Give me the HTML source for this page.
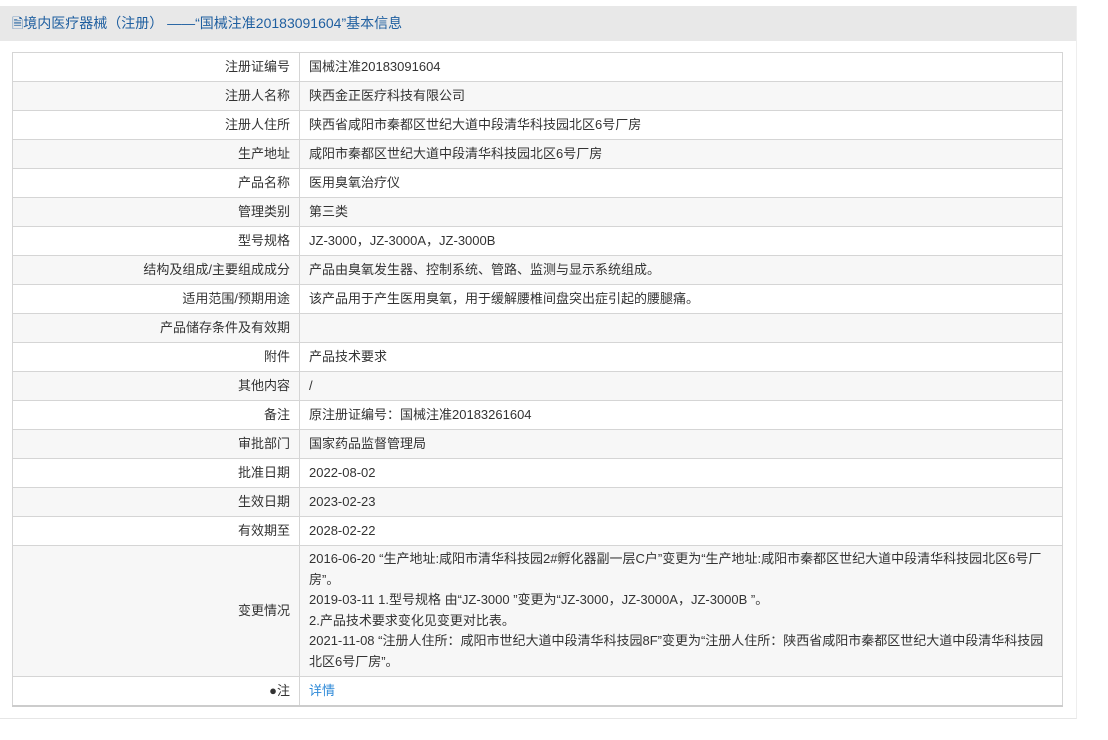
<!DOCTYPE html>
<html><head><meta charset="utf-8"><style>
body{margin:0;background:#fff;font-family:"Liberation Sans","Noto Sans CJK SC",sans-serif;font-size:13px;color:#333;}
.wrap{position:absolute;left:0;top:6px;width:1076px;height:712px;border-right:1px solid #eee;border-bottom:1px solid #e6e6e6;}
.hd{height:35px;background:#e8e8e8;color:#1f5fa0;font-size:14px;line-height:35px;padding-left:12px;}
table{position:absolute;left:12px;top:46px;width:1051px;border-collapse:collapse;border:1px solid #ccc;border-bottom:2px solid #ccc;}
td{border:1px solid #d5d5d5;height:28px;padding:0 9px;line-height:20px;}
td.l{width:268px;text-align:right;}
tr:nth-child(even){background:#f7f7f7;}
a{color:#2f8ad8;text-decoration:none;}
</style></head><body>
<div class="wrap"><div class="hd">🗎境内医疗器械（注册） ——“国械注准20183091604”基本信息</div>
<table>
<tr><td class="l">注册证编号</td><td>国械注准20183091604</td></tr>
<tr><td class="l">注册人名称</td><td>陕西金正医疗科技有限公司</td></tr>
<tr><td class="l">注册人住所</td><td>陕西省咸阳市秦都区世纪大道中段清华科技园北区6号厂房</td></tr>
<tr><td class="l">生产地址</td><td>咸阳市秦都区世纪大道中段清华科技园北区6号厂房</td></tr>
<tr><td class="l">产品名称</td><td>医用臭氧治疗仪</td></tr>
<tr><td class="l">管理类别</td><td>第三类</td></tr>
<tr><td class="l">型号规格</td><td>JZ-3000，JZ-3000A，JZ-3000B</td></tr>
<tr><td class="l">结构及组成/主要组成成分</td><td>产品由臭氧发生器、控制系统、管路、监测与显示系统组成。</td></tr>
<tr><td class="l">适用范围/预期用途</td><td>该产品用于产生医用臭氧，用于缓解腰椎间盘突出症引起的腰腿痛。</td></tr>
<tr><td class="l">产品储存条件及有效期</td><td></td></tr>
<tr><td class="l">附件</td><td>产品技术要求</td></tr>
<tr><td class="l">其他内容</td><td>/</td></tr>
<tr><td class="l">备注</td><td>原注册证编号：国械注准20183261604</td></tr>
<tr><td class="l">审批部门</td><td>国家药品监督管理局</td></tr>
<tr><td class="l">批准日期</td><td>2022-08-02</td></tr>
<tr><td class="l">生效日期</td><td>2023-02-23</td></tr>
<tr><td class="l">有效期至</td><td>2028-02-22</td></tr>
<tr><td class="l" style="height:129px">变更情况</td><td style="padding-top:3px;padding-bottom:4px;line-height:20.5px">2016-06-20 “生产地址:咸阳市清华科技园2#孵化器副一层C户”变更为“生产地址:咸阳市秦都区世纪大道中段清华科技园北区6号厂房”。<br>2019-03-11 1.型号规格 由“JZ-3000 ”变更为“JZ-3000，JZ-3000A，JZ-3000B ”。<br>2.产品技术要求变化见变更对比表。<br>2021-11-08 “注册人住所：咸阳市世纪大道中段清华科技园8F”变更为“注册人住所：陕西省咸阳市秦都区世纪大道中段清华科技园北区6号厂房”。</td></tr>
<tr><td class="l">●注</td><td><a>详情</a></td></tr>
</table></div>
</body></html>
